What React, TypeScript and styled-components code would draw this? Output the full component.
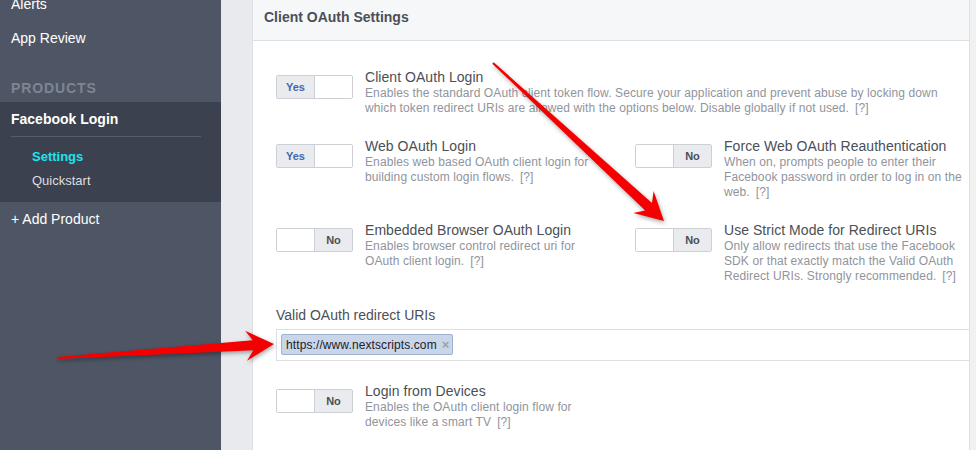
import React from "react";
import styled, { createGlobalStyle } from "styled-components";

const GlobalStyle = createGlobalStyle`
  html, body {
    margin: 0;
    padding: 0;
    background: #e9eaed;
    font-family: "Liberation Sans", Arial, Helvetica, sans-serif;
    overflow: hidden;
  }
`;

const Page = styled.div`
  position: relative;
  display: flex;
  width: 976px;
  height: 450px;
  overflow: hidden;
  background: #e9eaed;
`;

/* ---------- sidebar ---------- */

const Sidebar = styled.nav`
  width: 221px;
  flex-shrink: 0;
  background: #4e5665;
`;

const NavList = styled.div`
  margin-top: -13px;
`;

const NavItem = styled.div`
  height: 34px;
  line-height: 34px;
  padding-left: 11px;
  font-size: 14px;
  color: #ffffff;
`;

const SectionLabel = styled.div`
  margin: 24px 0 5px;
  padding-left: 11px;
  line-height: 18px;
  font-size: 14px;
  font-weight: bold;
  letter-spacing: 0.9px;
  color: #7f8591;
`;

const ProductBlock = styled.div`
  background: #3b414e;
  padding-bottom: 9px;
`;

const ProductTitle = styled.div`
  margin: 0 20px 0 11px;
  padding: 8px 0 8px;
  line-height: 18px;
  font-size: 14px;
  font-weight: bold;
  color: #ffffff;
  border-bottom: 1px solid #555c6a;
`;

const SubNav = styled.div`
  padding-top: 8px;
`;

const SubNavItem = styled.div<{ $active?: boolean }>`
  padding-left: 32px;
  line-height: 24px;
  font-size: 13px;
  font-weight: ${(p) => (p.$active ? "bold" : "normal")};
  color: ${(p) => (p.$active ? "#22e2ef" : "#dcdee3")};
`;

/* ---------- main panel ---------- */

const Main = styled.main`
  flex: 1;
  padding-left: 31px;
  display: flex;
`;

const Panel = styled.section`
  flex: 1;
  background: #ffffff;
  border-left: 1px solid #dddfe2;
  border-right: 1px solid #dddfe2;
`;

const ScrollTrack = styled.div`
  width: 6px;
  flex-shrink: 0;
  background: #f1f1f1;
`;

const PanelHeader = styled.header`
  height: 41px;
  box-sizing: border-box;
  padding: 8px 0 0 11px;
  background: #f6f7f9;
  border-bottom: 1px solid #dddfe2;
  line-height: 18px;
  font-size: 14px;
  font-weight: bold;
  color: #4b4f56;
`;

const PanelBody = styled.div`
  padding: 27px 0 0 23px;
`;

const SettingsGrid = styled.div`
  display: grid;
  grid-template-columns: 359px 1fr;
  row-gap: 21px;
`;

const Setting = styled.div<{ $wide?: boolean }>`
  display: flex;
  align-items: flex-start;
  grid-column: ${(p) => (p.$wide ? "1 / -1" : "auto")};
`;

const SettingText = styled.div<{ $width: number }>`
  margin-left: 12px;
  width: ${(p) => p.$width}px;
`;

const SettingTitle = styled.div`
  line-height: 18px;
  font-size: 14px;
  letter-spacing: 0.05px;
  color: #4b4f56;
`;

const SettingDesc = styled.div`
  line-height: 15px;
  font-size: 12px;
  letter-spacing: 0.1px;
  color: #90949c;
`;

const Help = styled.span`
  margin-left: 6px;
  font-size: 12px;
  color: #8d949e;
`;

const Switch = styled.div`
  display: flex;
  flex-shrink: 0;
  width: 77px;
  height: 24px;
  margin-top: 7px;
  box-sizing: border-box;
  border: 1px solid #ccd0d5;
  border-radius: 2px;
  overflow: hidden;
`;

const SwitchHalf = styled.div<{ $pressed: boolean; $on?: boolean }>`
  flex: 1;
  display: flex;
  align-items: center;
  justify-content: center;
  font-size: 11px;
  font-weight: bold;
  color: ${(p) => (p.$on ? "#4267b2" : "#4b4f56")};
  background: ${(p) => (p.$pressed ? "#e9ebee" : "#ffffff")};
  & + & {
    border-left: 1px solid #ccd0d5;
  }
`;

const FieldLabel = styled.div`
  margin-top: 22px;
  line-height: 18px;
  font-size: 14px;
  color: #4b4f56;
`;

const TokenInput = styled.div`
  margin-top: 5px;
  height: 32px;
  box-sizing: border-box;
  padding: 4px;
  display: flex;
  align-items: flex-start;
  border: 1px solid #dddfe2;
  border-right: none;
`;

const Token = styled.span`
  display: inline-flex;
  align-items: center;
  height: 21px;
  box-sizing: border-box;
  padding: 0 3px 0 4px;
  background: #c9d5e8;
  border: 1px solid #9eb1d2;
  border-radius: 2px;
  font-size: 12px;
  letter-spacing: 0.1px;
  color: #1d2129;
`;

const TokenRemove = styled.span`
  margin-left: 5px;
  font-size: 13px;
  font-weight: bold;
  color: #9aa2ae;
`;

const DeviceRow = styled(Setting)`
  margin-top: 21px;
`;

const Overlay = styled.svg`
  position: absolute;
  left: 0;
  top: 0;
  width: 976px;
  height: 450px;
  pointer-events: none;
  filter: drop-shadow(1px 2px 2px rgba(0, 0, 0, 0.35));
`;

/* ---------- pieces ---------- */

const Toggle = ({ on }: { on: boolean }) => (
  <Switch>
    <SwitchHalf $pressed={on} $on>
      {on ? "Yes" : ""}
    </SwitchHalf>
    <SwitchHalf $pressed={!on}>{on ? "" : "No"}</SwitchHalf>
  </Switch>
);

type OptionProps = {
  title: string;
  desc: string;
  on?: boolean;
  width?: number;
  wide?: boolean;
};

const Option = ({ title, desc, on = false, width = 245, wide }: OptionProps) => (
  <Setting $wide={wide}>
    <Toggle on={on} />
    <SettingText $width={width}>
      <SettingTitle>{title}</SettingTitle>
      <SettingDesc>
        {desc}
        <Help>[?]</Help>
      </SettingDesc>
    </SettingText>
  </Setting>
);

// tapered callout arrow from a thin tail to a notched head
const arrowPoints = (x1: number, y1: number, x2: number, y2: number) => {
  const dx = x2 - x1;
  const dy = y2 - y1;
  const len = Math.hypot(dx, dy);
  const ux = dx / len;
  const uy = dy / len;
  const vx = -uy;
  const vy = ux;
  const shape = [
    [0, -1],
    [len - 21, -5],
    [len - 28, -15],
    [len, 0],
    [len - 28, 15],
    [len - 21, 5],
    [0, 1],
  ];
  return shape
    .map(([u, v]) => `${x1 + ux * u + vx * v},${y1 + uy * u + vy * v}`)
    .join(" ");
};

const App = () => (
  <>
    <GlobalStyle />
    <Page>
      <Sidebar>
        <NavList>
          <NavItem>Alerts</NavItem>
          <NavItem>App Review</NavItem>
        </NavList>
        <SectionLabel>PRODUCTS</SectionLabel>
        <ProductBlock>
          <ProductTitle>Facebook Login</ProductTitle>
          <SubNav>
            <SubNavItem $active>Settings</SubNavItem>
            <SubNavItem>Quickstart</SubNavItem>
          </SubNav>
        </ProductBlock>
        <NavItem>+ Add Product</NavItem>
      </Sidebar>

      <Main>
        <Panel>
          <PanelHeader>Client OAuth Settings</PanelHeader>
          <PanelBody>
            <SettingsGrid>
              <Option
                wide
                on
                width={580}
                title="Client OAuth Login"
                desc="Enables the standard OAuth client token flow. Secure your application and prevent abuse by locking down which token redirect URIs are allowed with the options below. Disable globally if not used."
              />
              <Option
                on
                title="Web OAuth Login"
                desc="Enables web based OAuth client login for building custom login flows."
              />
              <Option
                width={240}
                title="Force Web OAuth Reauthentication"
                desc="When on, prompts people to enter their Facebook password in order to log in on the web."
              />
              <Option
                title="Embedded Browser OAuth Login"
                desc="Enables browser control redirect uri for OAuth client login."
              />
              <Option
                width={240}
                title="Use Strict Mode for Redirect URIs"
                desc="Only allow redirects that use the Facebook SDK or that exactly match the Valid OAuth Redirect URIs. Strongly recommended."
              />
            </SettingsGrid>

            <FieldLabel>Valid OAuth redirect URIs</FieldLabel>
            <TokenInput>
              <Token>
                https://www.nextscripts.com
                <TokenRemove>×</TokenRemove>
              </Token>
            </TokenInput>

            <DeviceRow>
              <Toggle on={false} />
              <SettingText $width={245}>
                <SettingTitle>Login from Devices</SettingTitle>
                <SettingDesc>
                  Enables the OAuth client login flow for devices like a smart TV
                  <Help>[?]</Help>
                </SettingDesc>
              </SettingText>
            </DeviceRow>
          </PanelBody>
        </Panel>
        <ScrollTrack />
      </Main>

      <Overlay viewBox="0 0 976 450">
        <polygon points={arrowPoints(493, 63, 664, 221)} fill="#f50000" />
        <polygon points={arrowPoints(57, 358, 274, 344)} fill="#f50000" />
      </Overlay>
    </Page>
  </>
);

export default App;
